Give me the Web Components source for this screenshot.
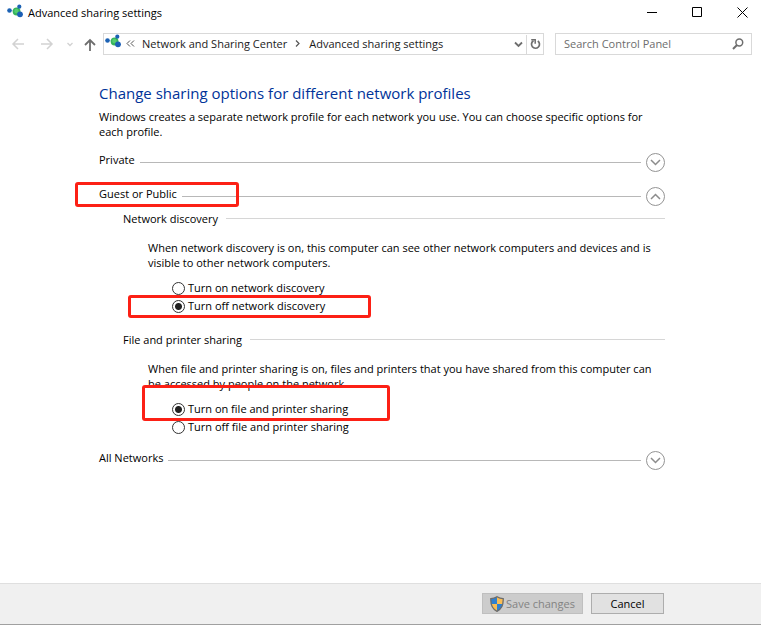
<!DOCTYPE html>
<html lang="en">
<head>
<meta charset="utf-8">
<title>Advanced sharing settings</title>
<style>
  html, body { margin: 0; }
  body {
    font: 11px/15px "Open Sans", "Noto Sans", sans-serif;
    color: #000;
    background: #fff;
  }
</style>
</head>
<body>
<control-window></control-window>

<script>
const define = (name, html, setup) => {
  const template = document.createElement('template');
  template.innerHTML = html;
  customElements.define(name, class extends HTMLElement {
    connectedCallback() {
      if (this.shadowRoot) return;
      const root = this.attachShadow({ mode: 'open' });
      root.append(template.content.cloneNode(true));
      if (setup) setup(this, root);
    }
  });
};

define('network-icon', `
  <style>:host { display: block; flex: none; width: 17px; height: 16px; } svg { display: block; }</style>
  <svg width="17" height="16" viewBox="0 0 17 16" aria-hidden="true">
    <path d="M3 6.500 10 7 12 3" stroke="#b9d3ea" fill="none"/>
    <circle cx="2.500" cy="6.500" r="2.300" fill="#1c62b4"/>
    <circle cx="9.600" cy="7.500" r="3.900" fill="#35b35a"/>
    <circle cx="9.400" cy="7" r="2.200" fill="#55cc70"/>
    <circle cx="12.300" cy="2.700" r="2.100" fill="#1c62b4"/>
    <circle cx="13" cy="10.300" r="2.900" fill="#1c5fb5"/>
  </svg>`);

define('title-bar', `
  <style>
    :host { display: flex; align-items: center; height: 25px; padding-left: 7px; }
    h1 { flex: 1; margin: 0 0 0 4px; font: inherit; }
    .controls { display: flex; gap: 7px; }
    button { width: 38px; height: 24px; padding: 0; border: 0; background: none; display: grid; place-items: center; }
    network-icon { margin-bottom: 2px; }
  </style>
  <network-icon></network-icon>
  <h1><slot></slot></h1>
  <div class="controls">
    <button aria-label="Minimize"><svg width="11" height="11"><path d="M0 5.500h10" stroke="#000"/></svg></button>
    <button aria-label="Maximize"><svg width="11" height="11"><path d="M.5.5h9v9h-9z" stroke="#000" fill="none"/></svg></button>
    <button aria-label="Close"><svg width="11" height="11"><path d="m.5.5 10 10m0-10-10 10" stroke="#000" fill="none"/></svg></button>
  </div>`);

define('nav-bar', `
  <style>
    :host { display: flex; align-items: center; padding: 8px 9px 8px 10px; color: #1a1a1a; }
    button { padding: 0; border: 0; background: none; display: grid; place-items: center; height: 19px; }
    svg { display: block; }
    .arrows { display: flex; align-items: center; width: 93px; flex: none; }
    .arrows button { width: 16px; }
    .forward { margin-left: 13px; }
    .arrows .recent { width: 12px; margin-left: 9px; }
    .up { margin-left: 6px; }
    .address, .search {
      display: flex; align-items: center; box-sizing: border-box; height: 22px;
      border: 1px solid #d9d9d9; min-width: 0; background: #fff;
    }
    .address { flex: 1; padding-left: 1px; }
    .address network-icon { margin-bottom: 4px; }
    ol { display: flex; flex: 1; align-items: center; margin: 0; padding: 0 0 1px; list-style: none; white-space: nowrap; }
    a { color: inherit; text-decoration: none; }
    .more { margin: 0 7px 0 4px; }
    .sep { margin: 0 9px 0 8px; }
    .address .drop { width: 16px; }
    .address .refresh { width: 17px; border-left: 1px solid #d9d9d9; }
    .search { flex: 0 1 197px; margin-left: 11px; padding: 0 7px 0 8px; }
    input { flex: 1; min-width: 0; width: 0; padding: 0 0 2px; border: 0; outline: 0; background: none; font: inherit; color: #000; }
    input::placeholder { color: #6d6d6d; opacity: 1; }
  </style>
  <div class="arrows">
    <button aria-label="Back"><svg width="14" height="12"><path d="M13 6H2m5-5L2 6l5 5" stroke="#d2d2d2" stroke-width="1.500" fill="none"/></svg></button>
    <button class="forward" aria-label="Forward"><svg width="14" height="12"><path d="M1 6h11M7 1l5 5-5 5" stroke="#d2d2d2" stroke-width="1.500" fill="none"/></svg></button>
    <button class="recent" aria-label="Recent locations"><svg width="6" height="5"><path d="m.5 1 2.500 2.500L5.500 1" stroke="#d2d2d2" stroke-width="1.300" fill="none"/></svg></button>
    <button class="up" aria-label="Up"><svg width="12" height="13"><path d="M6 13V2M1 7l5-5 5 5" stroke="#6e6e6e" stroke-width="1.800" fill="none"/></svg></button>
  </div>
  <div class="address">
    <network-icon></network-icon>
    <ol>
      <li class="more"><svg width="9" height="7"><path d="M4 .5 1 3.500l3 3m4-6-3 3 3 3" stroke="#555" fill="none"/></svg></li>
      <li><a href="#network">Network and Sharing Center</a></li>
      <li class="sep"><svg width="5" height="7"><path d="m1 .5 3 3-3 3" stroke="#555" stroke-width="1.200" fill="none"/></svg></li>
      <li><a href="#advanced">Advanced sharing settings</a></li>
    </ol>
    <button class="drop" aria-label="Previous locations"><svg width="9" height="7"><path d="m1 1.500 3.500 3.500L8 1.500" stroke="#6e6e6e" stroke-width="1.800" fill="none"/></svg></button>
    <button class="refresh" aria-label="Refresh"><svg width="11" height="12"><path d="M7.800 3a4 4 0 1 1-4.300-.2" stroke="#6e6e6e" stroke-width="1.700" fill="none"/><path d="M1.200 1.700h4v4" stroke="#6e6e6e" stroke-width="1.500" fill="none"/></svg></button>
  </div>
  <div class="search">
    <input type="text" aria-label="Search Control Panel" placeholder="Search Control Panel">
    <svg width="12" height="12"><circle cx="7.300" cy="4.500" r="3.400" stroke="#6e6e6e" stroke-width="1.500" fill="none"/><path d="M5 7 1 11" stroke="#6e6e6e" stroke-width="2"/></svg>
  </div>`);

/* Red outline laid over the content it calls out. */
define('red-mark', `
  <style>
    :host { position: absolute; z-index: 1; box-sizing: border-box; border: 3px solid #fc2015; border-radius: 3px; pointer-events: none; }
  </style>`);

define('profile-section', `
  <style>
    :host { display: block; position: relative; }
    header { display: flex; align-items: center; height: 20px; }
    h3 { margin: 0 5px 6px 0; font: inherit; }
    .line { flex: 1; height: 1px; background: #b8b8b8; }
    button { width: 19px; height: 19px; margin-left: 5px; padding: 0; border: 1px solid #949494; border-radius: 50%; background: #fff; display: grid; place-items: center; }
    :host([open]) svg { transform: rotate(180deg); }
    .body { padding: 4px 0 0 24px; display: grid; gap: 16px; }
    :host(:not([open])) .body { display: none; }
  </style>
  <header>
    <h3></h3><span class="line"></span>
    <button><svg width="11" height="7" aria-hidden="true"><path d="m1 1 4.500 4.500L10 1" stroke="#8c8c8c" stroke-width="1.500" fill="none"/></svg></button>
  </header>
  <div class="body"><slot></slot></div>
  <slot name="mark"></slot>`,
  (host, root) => {
    const label = host.getAttribute('label');
    const button = root.querySelector('button');
    root.querySelector('h3').textContent = label;
    button.setAttribute('aria-label', label);
    button.setAttribute('aria-expanded', host.hasAttribute('open'));
    button.addEventListener('click', () => {
      button.setAttribute('aria-expanded', host.toggleAttribute('open'));
    });
  });

define('setting-group', `
  <style>
    :host { display: block; position: relative; }
    header { display: flex; align-items: center; height: 16px; }
    h4 { margin: 0 8px 0 0; font: inherit; }
    .line { flex: 1; height: 1px; background: #d6d6d6; }
    p { margin: 14px 0 9px 25px; }
    .options { padding-left: 49px; }
    label { display: flex; align-items: center; height: 18px; width: max-content; }
    span { padding-bottom: 2px; }
    input { appearance: none; box-sizing: border-box; width: 13px; height: 13px; margin: 0 3px 0 0; border: 1px solid #333; border-radius: 50%; background: #fff; }
    input:checked { background: radial-gradient(circle, #222 0 3px, #fff 4px); }
  </style>
  <header><h4></h4><span class="line" style="padding: 0"></span></header>
  <p><slot></slot></p>
  <div class="options" role="radiogroup">
    <label><input type="radio" name="state" value="on"><span></span></label>
    <label><input type="radio" name="state" value="off"><span></span></label>
  </div>
  <slot name="mark"></slot>`,
  (host, root) => {
    const label = host.getAttribute('label');
    root.querySelector('h4').textContent = label;
    root.querySelector('.options').setAttribute('aria-label', label);
    root.querySelectorAll('label').forEach(el => {
      const input = el.querySelector('input');
      input.checked = input.value === host.getAttribute('value');
      el.querySelector('span').textContent = 'Turn ' + input.value + ' ' + label.toLowerCase();
    });
  });

define('action-bar', `
  <style>
    :host { display: flex; justify-content: flex-end; gap: 8px; padding: 9px 97px 10px; background: #f0f0f0; border-top: 1px solid #dfdfdf; border-bottom: 1px solid #a0a0a0; }
    button { box-sizing: border-box; height: 21px; padding: 0 7px; font: inherit; border: 1px solid #adadad; background: #e1e1e1; color: #000; display: flex; align-items: center; justify-content: center; gap: 2px; min-width: 73px; }
    button:disabled { background: #ccc; border-color: #bfbfbf; color: #838383; }
  </style>
  <button disabled>
    <svg width="14" height="16" viewBox="0 0 14 16" aria-hidden="true">
      <path d="M7 .5C5 2 3 2.500.8 2.500.5 9 2 13 7 15.500 12 13 13.500 9 13.200 2.500 11 2.500 9 2 7 .5z" fill="#f8bd55"/>
      <path d="M7 1v7H1.200C.9 6 .9 4 1 2.500 3 2.500 5 2 7 1zM7 8h5.800C12.300 11.500 10.500 13.600 7 15.300z" fill="#2f80d0"/>
      <path d="M7 .7C5 2 3 2.600.8 2.600.5 9 2 13 7 15.300 12 13 13.500 9 13.200 2.600 11 2.600 9 2 7 .7z" fill="none" stroke="#6c6c6c" stroke-width="1.300"/>
    </svg>Save changes
  </button>
  <button>Cancel</button>`);

define('control-window', `
  <style>
    :host { display: flex; flex-direction: column; min-height: 100vh; }
    main { flex: 1; padding: 19px 96px 24px 99px; }
    h2 { margin: 0 0 5px; font-size: 15px; line-height: 22px; font-weight: 400; color: #003399; }
    p { margin: 0 0 13px; }
    .profiles { display: grid; gap: 14px; }
    .guest { left: -24px; top: -4px; width: 164px; height: 25px; }
    .discovery { left: 5px; top: 85px; width: 243px; height: 23px; }
    .sharing { left: 19px; top: 54px; width: 248px; height: 36px; }
  </style>
  <title-bar>Advanced sharing settings</title-bar>
  <nav-bar></nav-bar>
  <main>
    <h2>Change sharing options for different network profiles</h2>
    <p>Windows creates a separate network profile for each network you use. You can choose specific options for each profile.</p>
    <div class="profiles">
      <profile-section label="Private"></profile-section>
      <profile-section label="Guest or Public" open>
        <setting-group label="Network discovery" value="off">
          When network discovery is on, this computer can see other network computers and devices and is visible to other network computers.
          <red-mark class="discovery" slot="mark"></red-mark>
        </setting-group>
        <setting-group label="File and printer sharing" value="on">
          When file and printer sharing is on, files and printers that you have shared from this computer can be accessed by people on the network.
          <red-mark class="sharing" slot="mark"></red-mark>
        </setting-group>
        <red-mark class="guest" slot="mark"></red-mark>
      </profile-section>
      <profile-section label="All Networks"></profile-section>
    </div>
  </main>
  <action-bar></action-bar>`);
</script>
</body>
</html>
